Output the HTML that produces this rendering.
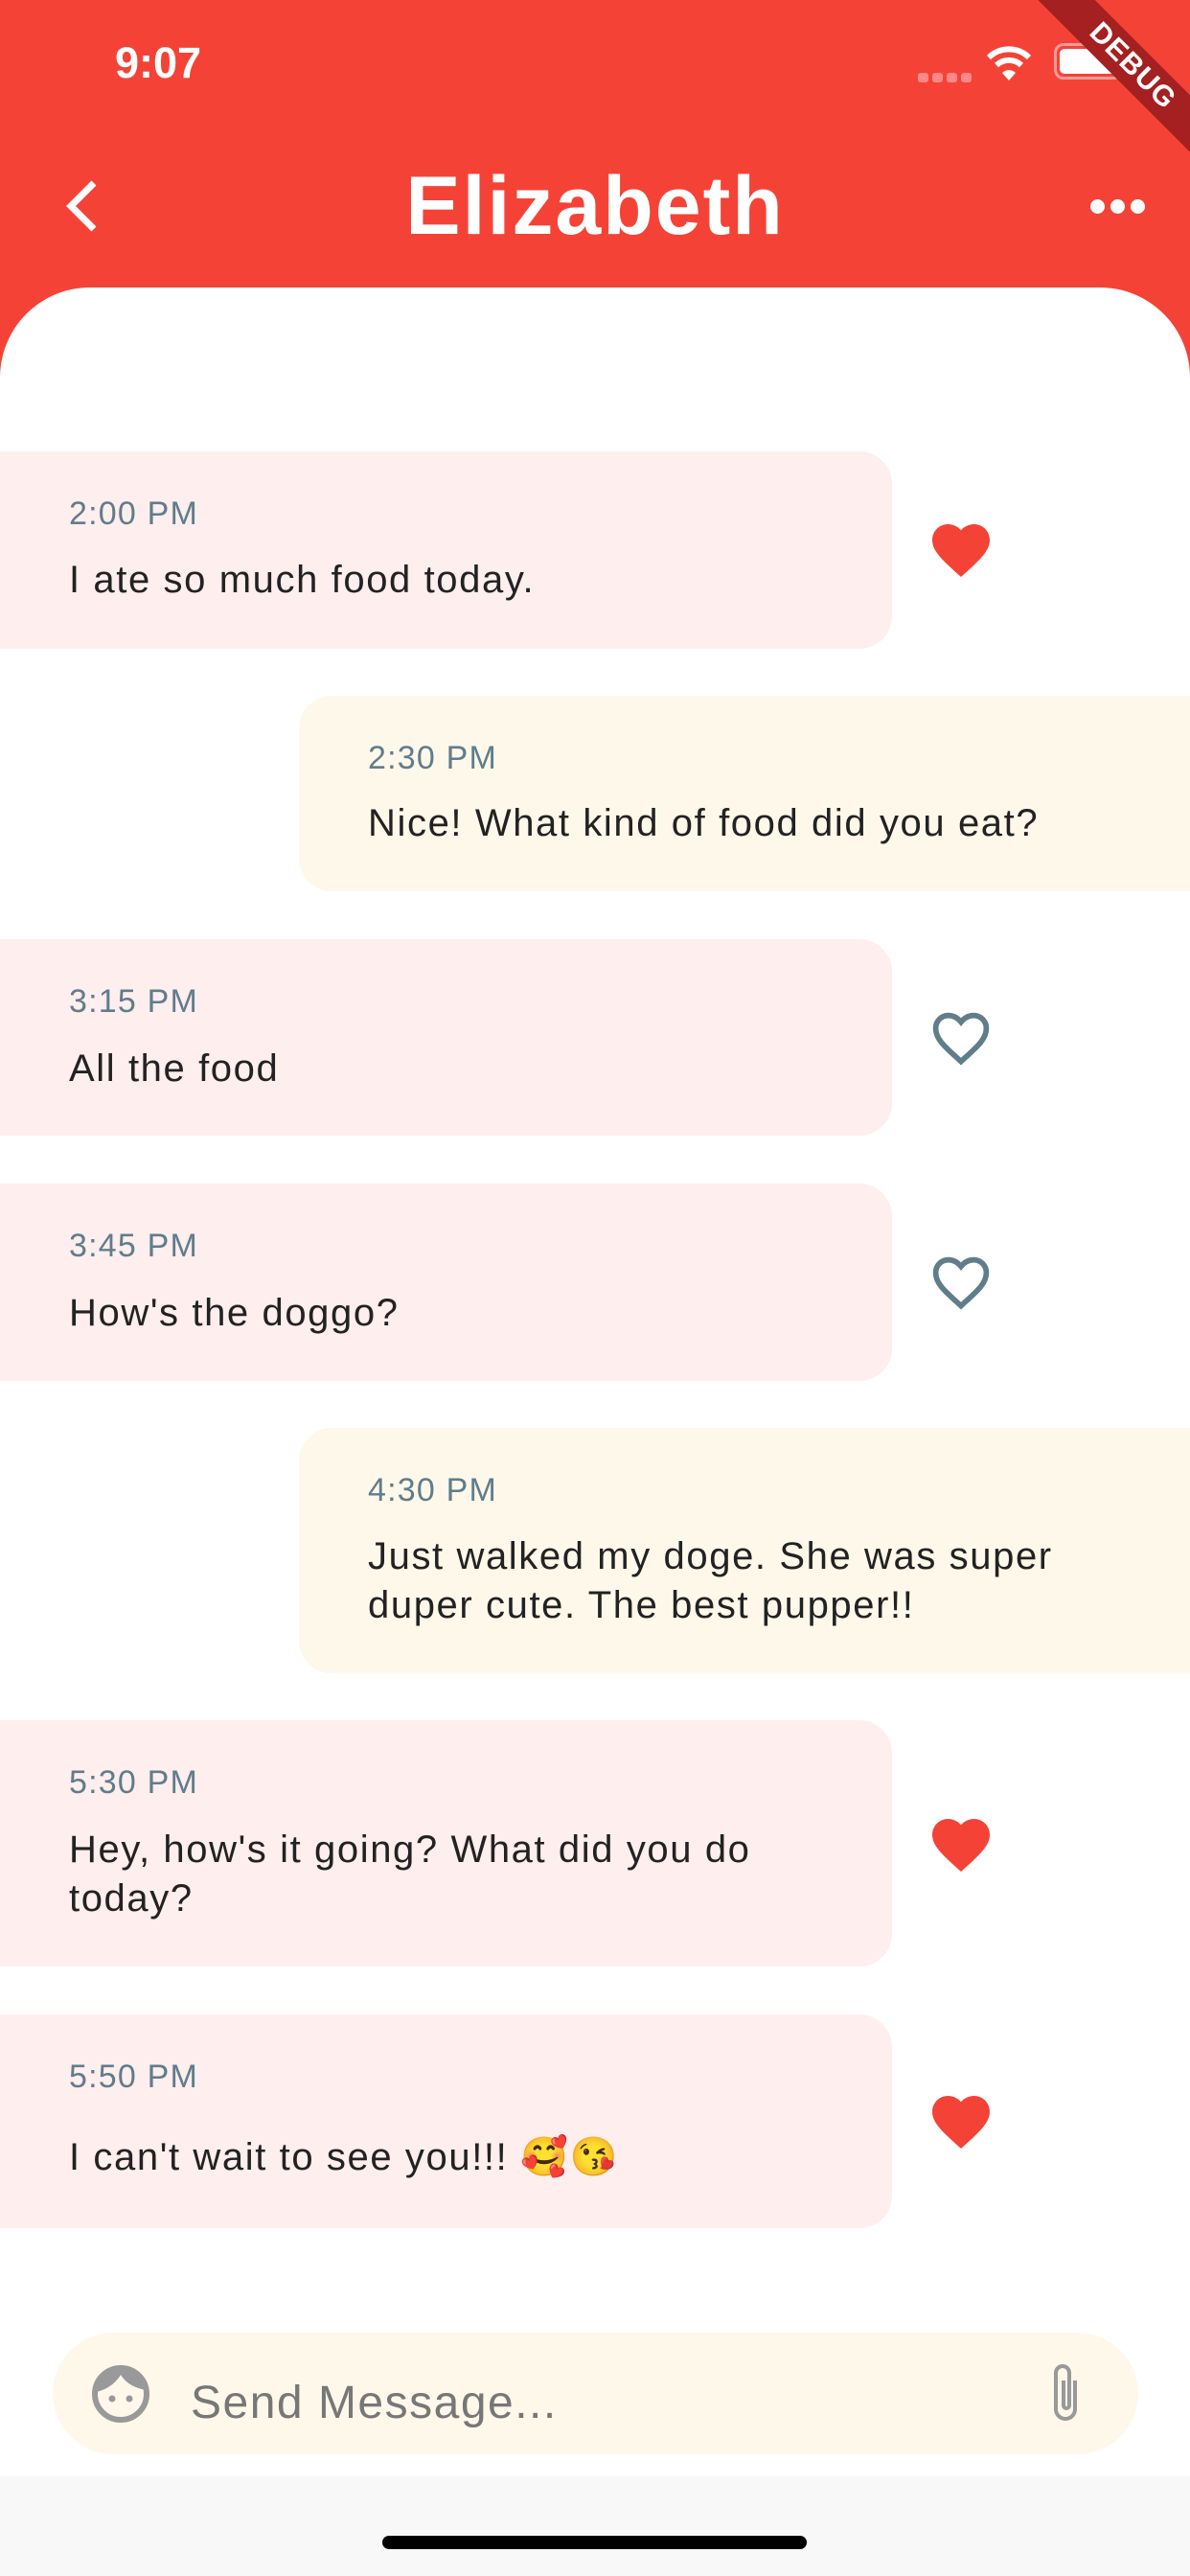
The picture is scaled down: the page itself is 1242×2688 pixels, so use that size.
<!DOCTYPE html>
<html><head><meta charset="utf-8"><style>
*{margin:0;padding:0;box-sizing:border-box}
body{width:1242px;height:2688px;position:relative;overflow:hidden;background:#fff;font-family:"Liberation Sans",sans-serif}
.hdr{position:absolute;left:0;top:0;width:1242px;height:400px;background:#F44336}
.sheet{position:absolute;left:0;top:300px;width:1242px;height:2300px;background:#fff;border-radius:94px 94px 0 0}
.b{position:absolute;border-radius:34px}
.r{left:0;width:931px;background:#FEEEEE;border-radius:0 34px 34px 0}
.s{left:312px;width:930px;background:#FEF8EB;border-radius:34px 0 0 34px}
.t{position:absolute;font-size:34px;letter-spacing:1.2px;color:#607D8B}
.m{position:absolute;font-size:40px;letter-spacing:1.6px;color:#222;line-height:51px}
.h{position:absolute;left:967px;width:72px;height:72px}
</style></head><body>
<div class="hdr"></div>
<div style="position:absolute;left:120px;top:40px;font-size:45px;color:#fff;font-weight:bold">9:07</div>
<div style="position:absolute;left:958px;top:76px;width:56px;height:10px;display:flex;gap:4px"><i style="flex:1;background:#f88;border-radius:3px"></i><i style="flex:1;background:#f88;border-radius:3px"></i><i style="flex:1;background:#f88;border-radius:3px"></i><i style="flex:1;background:#f88;border-radius:3px"></i></div>
<svg style="position:absolute;left:1028px;top:46px" width="50" height="40" viewBox="0 0 50 40"><path d="M4 14 A30 30 0 0 1 46 14" stroke="#fff" stroke-width="6" fill="none"/><path d="M12 22 A19 19 0 0 1 38 22" stroke="#fff" stroke-width="6" fill="none"/><path d="M25 38 L18 30 A10 10 0 0 1 32 30Z" fill="#fff"/></svg>
<div style="position:absolute;left:1100px;top:45px;width:72px;height:38px;border:3px solid #f99;border-radius:10px;padding:3px"><div style="width:100%;height:100%;background:#fff;border-radius:5px"></div></div>
<div style="position:absolute;left:1052px;top:48px;width:260px;height:42px;background:#A52020;transform:rotate(45deg);color:#fff;font-weight:bold;font-size:30px;text-align:center;line-height:42px;letter-spacing:1px">DEBUG</div>
<svg style="position:absolute;left:60px;top:185px" width="50" height="60" viewBox="0 0 50 60"><path d="M38 6 L14 30 L38 54" stroke="#fff" stroke-width="7" fill="none"/></svg>
<div style="position:absolute;left:0;width:1242px;top:166px;text-align:center;font-size:86px;letter-spacing:2px;font-weight:bold;color:#fff">Elizabeth</div>
<div style="position:absolute;left:1138px;top:208px;display:flex;gap:6px"><i style="width:15px;height:15px;border-radius:50%;background:#fff"></i><i style="width:15px;height:15px;border-radius:50%;background:#fff"></i><i style="width:15px;height:15px;border-radius:50%;background:#fff"></i></div>
<div class="sheet"></div>

<div class="b r" style="top:471px;height:206px"></div>
<div class="t" style="left:72px;top:517px">2:00 PM</div>
<div class="m" style="left:72px;top:580px">I ate so much food today.</div>
<svg class="h" style="top:538px" viewBox="0 0 24 24"><path d="M12 21.35l-1.45-1.32C5.4 15.360 2 12.28 2 8.5 2 5.42 4.42 3 7.5 3c1.74 0 3.41.81 4.5 2.09C13.09 3.81 14.76 3 16.5 3 19.58 3 22 5.42 22 8.5c0 3.78-3.4 6.86-8.55 11.54L12 21.35z" fill="#F44336"/></svg>

<div class="b s" style="top:726px;height:204px"></div>
<div class="t" style="left:384px;top:772px">2:30 PM</div>
<div class="m" style="left:384px;top:834px">Nice! What kind of food did you eat?</div>

<div class="b r" style="top:980px;height:205px"></div>
<div class="t" style="left:72px;top:1026px">3:15 PM</div>
<div class="m" style="left:72px;top:1090px">All the food</div>
<svg class="h" style="top:1047px" viewBox="0 0 24 24"><path d="M12 20.2l-1.2-1.1C6 14.8 3.2 12.2 3.2 8.7 3.2 6.2 5.1 4.2 7.6 4.2c1.6 0 3.2.8 4.4 2.3 1.2-1.5 2.8-2.3 4.4-2.3 2.5 0 4.4 2 4.4 4.5 0 3.5-2.8 6.1-7.6 10.4z" fill="none" stroke="#607D8B" stroke-width="1.9"/></svg>

<div class="b r" style="top:1235px;height:206px"></div>
<div class="t" style="left:72px;top:1281px">3:45 PM</div>
<div class="m" style="left:72px;top:1345px">How's the doggo?</div>
<svg class="h" style="top:1302px" viewBox="0 0 24 24"><path d="M12 20.2l-1.2-1.1C6 14.8 3.2 12.2 3.2 8.7 3.2 6.2 5.1 4.2 7.6 4.2c1.6 0 3.2.8 4.4 2.3 1.2-1.5 2.8-2.3 4.4-2.3 2.5 0 4.4 2 4.4 4.5 0 3.5-2.8 6.1-7.6 10.4z" fill="none" stroke="#607D8B" stroke-width="1.9"/></svg>

<div class="b s" style="top:1490px;height:256px"></div>
<div class="t" style="left:384px;top:1536px">4:30 PM</div>
<div class="m" style="left:384px;top:1599px">Just walked my doge. She was super<br>duper cute. The best pupper!!</div>

<div class="b r" style="top:1795px;height:257px"></div>
<div class="t" style="left:72px;top:1841px">5:30 PM</div>
<div class="m" style="left:72px;top:1905px">Hey, how's it going? What did you do<br>today?</div>
<svg class="h" style="top:1889px" viewBox="0 0 24 24"><path d="M12 21.35l-1.45-1.32C5.4 15.36 2 12.28 2 8.5 2 5.42 4.42 3 7.5 3c1.74 0 3.41.81 4.5 2.09C13.09 3.81 14.76 3 16.5 3 19.58 3 22 5.42 22 8.5c0 3.78-3.4 6.86-8.55 11.54L12 21.35z" fill="#F44336"/></svg>

<div class="b r" style="top:2102px;height:223px"></div>
<div class="t" style="left:72px;top:2148px">5:50 PM</div>
<div class="m" style="left:72px;top:2226px">I can't wait to see you!!! 🥰😘</div>
<svg class="h" style="top:2178px" viewBox="0 0 24 24"><path d="M12 21.35l-1.45-1.32C5.4 15.36 2 12.28 2 8.5 2 5.42 4.42 3 7.5 3c1.74 0 3.41.81 4.5 2.09C13.09 3.81 14.76 3 16.5 3 19.58 3 22 5.42 22 8.5c0 3.78-3.4 6.86-8.55 11.54L12 21.35z" fill="#F44336"/></svg>

<div style="position:absolute;left:55px;top:2434px;width:1133px;height:127px;border-radius:64px;background:#FEF8EB"></div>
<svg style="position:absolute;left:94px;top:2466px" width="64" height="64" viewBox="0 0 64 64"><circle cx="32" cy="32" r="27" fill="none" stroke="#999" stroke-width="6"/><path d="M6 30 C10 12 24 6 36 6 C48 6 56 16 58 28 C48 26 38 22 32 12 C26 22 16 28 6 30Z" fill="#999"/><circle cx="23" cy="37" r="3.5" fill="#999"/><circle cx="41" cy="37" r="3.5" fill="#999"/></svg>
<div style="position:absolute;left:199px;top:2480px;font-size:48px;letter-spacing:1.5px;color:#777">Send Message...</div>
<svg style="position:absolute;left:1090px;top:2462px" width="46" height="72" viewBox="0 0 46 72"><path d="M32 22 V52 A10 10 0 0 1 12 52 V14 A7 7 0 0 1 26 14 V48 A3 3 0 0 1 20 48 V22" fill="none" stroke="#999" stroke-width="4"/></svg>
<div style="position:absolute;left:0;top:2584px;width:1242px;height:104px;background:#F8F8F8"></div>
<div style="position:absolute;left:399px;top:2646px;width:443px;height:14px;border-radius:7px;background:#000"></div>
</body></html>
